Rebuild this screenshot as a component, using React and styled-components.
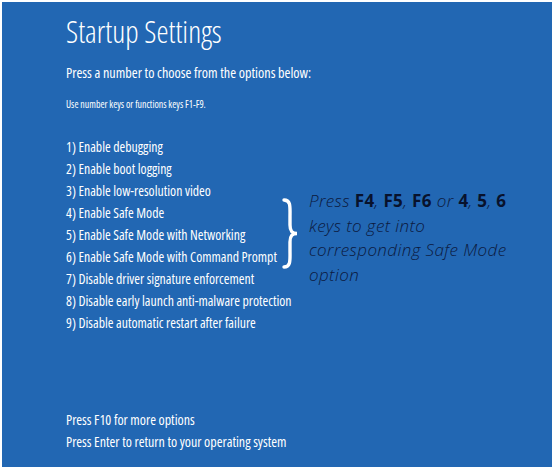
import React from "react";
import styled, { createGlobalStyle } from "styled-components";

const Global = createGlobalStyle`
  html, body {
    margin: 0;
    padding: 0;
    background: #ffffff;
  }
  body {
    width: 554px;
    height: 470px;
    overflow: hidden;
  }
`;

const Screen = styled.div`
  box-sizing: border-box;
  margin: 2px 2px 0 2px;
  width: 550px;
  height: 465px;
  background: #2267b3;
  color: #ffffff;
  font-family: "Open Sans", "Noto Sans", sans-serif;
  font-stretch: 75%;
  padding: 10px 0 0 64px;
  display: flex;
  flex-direction: column;
`;

const Title = styled.h1`
  margin: 0;
  font-size: 30.5px;
  font-weight: 300;
  line-height: 38px;
`;

const Lead = styled.p`
  margin: 14px 0 0;
  font-size: 14.2px;
  line-height: 18px;
`;

const Hint = styled.p`
  margin: 16px 0 0;
  font-size: 9.9px;
  line-height: 12px;
`;

const Body = styled.div`
  margin-top: 26px;
  display: flex;
  align-items: flex-start;
`;

const List = styled.ol`
  flex: none;
  width: 216px;
  margin: 0;
  padding: 0;
  list-style: none;
`;

const Item = styled.li`
  font-size: 13.8px;
  line-height: 22px;
  white-space: nowrap;
`;

const Note = styled.div`
  display: flex;
  align-items: flex-start;
  margin-top: 62px;
`;

const Brace = styled.svg`
  flex: none;
  width: 17px;
  height: 71px;
`;

const NoteText = styled.p`
  margin: -9px 0 0 10px;
  width: 210px;
  font-size: 17px;
  font-weight: 300;
  line-height: 24.5px;
  letter-spacing: 0.4px;
  font-style: italic;
  font-stretch: 100%;
  color: #0c1a40;
  b {
    font-weight: 700;
    font-style: normal;
    color: #08122c;
  }
`;

const Footer = styled.div`
  margin-top: auto;
  padding-bottom: 14px;
`;

const FooterLine = styled.div`
  font-size: 14px;
  line-height: 22px;
`;

const options = [
  "Enable debugging",
  "Enable boot logging",
  "Enable low-resolution video",
  "Enable Safe Mode",
  "Enable Safe Mode with Networking",
  "Enable Safe Mode with Command Prompt",
  "Disable driver signature enforcement",
  "Disable early launch anti-malware protection",
  "Disable automatic restart after failure",
];

export default function App() {
  return (
    <>
      <Global />
      <Screen>
        <Title>Startup Settings</Title>
        <Lead>Press a number to choose from the options below:</Lead>
        <Hint>Use number keys or functions keys F1-F9.</Hint>
        <Body>
          <List>
            {options.map((o, i) => (
              <Item key={o}>
                {i + 1}) {o}
              </Item>
            ))}
          </List>
          <Note>
            <Brace viewBox="0 0 17 71">
              <path
                d="M2 2 C9 2 8 9 8 19 L8 27 C8 33 10 35.5 15 35.5 C10 35.5 8 38 8 44 L8 52 C8 62 9 69 2 69"
                fill="none"
                stroke="#ffffff"
                strokeWidth="3.4"
                strokeLinecap="round"
              />
            </Brace>
            <NoteText>
              Press <b>F4</b>, <b>F5</b>, <b>F6</b> or <b>4</b>, <b>5</b>, <b>6</b>{" "}
              keys to get into corresponding Safe Mode option
            </NoteText>
          </Note>
        </Body>
        <Footer>
          <FooterLine>Press F10 for more options</FooterLine>
          <FooterLine>Press Enter to return to your operating system</FooterLine>
        </Footer>
      </Screen>
    </>
  );
}
